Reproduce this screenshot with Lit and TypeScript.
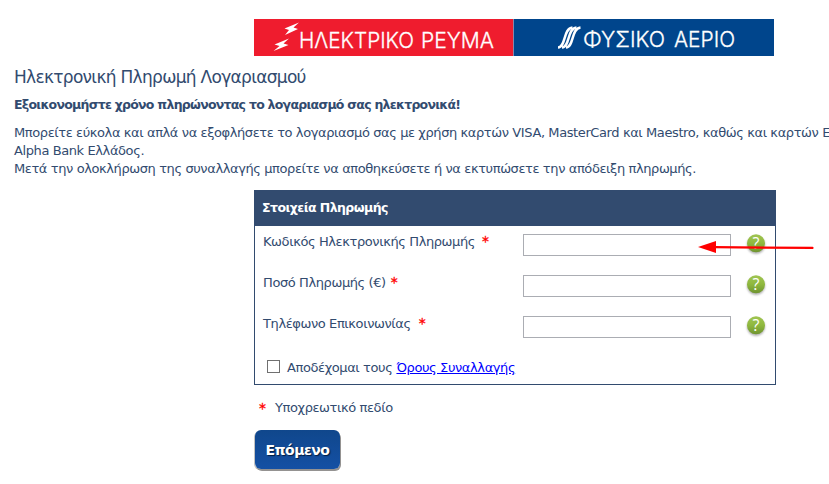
import { LitElement, html, css } from "lit";
import { customElement, property } from "lit/decorators.js";

@customElement("help-icon")
class HelpIcon extends LitElement {
  static styles = css`
    :host { display: block; width: 20px; height: 22px; }
    svg { display: block; overflow: visible; }
    text { font: 400 16px "Open Sans", "Noto Sans", sans-serif; letter-spacing: 0; }
  `;
  render() {
    return html`<svg width="20" height="22" viewBox="0 0 20 22">
      <defs>
        <linearGradient id="g" x1="0" y1="0" x2="0" y2="1">
          <stop offset="0" stop-color="#a0c552" />
          <stop offset="0.5" stop-color="#8fb83e" />
          <stop offset="1" stop-color="#6f9430" />
        </linearGradient>
        <filter id="s" x="-20%" y="-20%" width="140%" height="150%"><feGaussianBlur stdDeviation="0.8" /></filter>
      </defs>
      <circle cx="10" cy="11" r="9" fill="#777" opacity="0.6" filter="url(#s)" />
      <circle cx="10" cy="9.3" r="9" fill="url(#g)" />
      <text x="10" y="15" text-anchor="middle" fill="#fff">?</text>
    </svg>`;
  }
}

@customElement("form-row")
class FormRow extends LitElement {
  @property() label = "";
  @property({ type: Number }) gap = 8;
  static styles = css`
    :host { display: grid; grid-template-columns: 260px 208px 1fr; height: 41px; align-items: start; }
    .label { display: flex; line-height: 18px; padding-top: 7px; white-space: nowrap; }
    .star { color: #f00; font-size: 14px; -webkit-text-stroke: 0.3px #f00; position: relative; top: -1px; }
    .field { box-sizing: border-box; width: 208px; height: 22px; margin: 8px 0 0; padding: 0 4px; border: 1px solid #abadb3; border-radius: 0; background: #fff; outline: 0; font: inherit; }
    help-icon { margin: 8px 0 0 15px; }
  `;
  render() {
    return html`
      <div class="label"><span>${this.label}</span><span class="star" style="margin-left:${this.gap}px">*</span></div>
      <input class="field" aria-label=${this.label} />
      <help-icon></help-icon>
    `;
  }
}

@customElement("app-root")
class AppRoot extends LitElement {
  static styles = css`
    :host {
      display: block; position: relative; box-sizing: border-box; width: 829px; height: 484px;
      overflow: hidden; padding: 19px 0 0 14px; background: #fff; color: #324b6f;
      font: 13px/18px Verdana, "DejaVu Sans", sans-serif; letter-spacing: -0.4px;
    }
    .banner { display: flex; width: 520px; height: 37px; margin-left: 240px; }
    .tab { display: block; height: 37px; }
    .red { width: 259px; background: #ef1c2e; border-right: 1px solid #8a86a8; }
    .blue { width: 260px; background: #00458c; }
    .tab svg { display: block; overflow: visible; }
    .tab text { font-family: "Inter", sans-serif; font-size: 22px; font-weight: 300; letter-spacing: 0; fill: #fff; stroke: #fff; stroke-width: 0.3px; }
    h1 { margin: 10px 0 0; font-size: 17px; line-height: 22px; font-weight: 400; white-space: nowrap; letter-spacing: -0.7px; }
    h2 { margin: 8px 0 0; font-size: 12.5px; line-height: 18px; font-weight: 700; white-space: nowrap; letter-spacing: -0.74px; }
    .intro { margin: 10px 0 0; white-space: nowrap; }
    .intro div { height: 18px; }
    .panel { box-sizing: border-box; width: 522px; height: 195px; margin: 12px 0 0 240px; border: 1px solid #324b6f; }
    .head { height: 35px; padding-left: 7px; background: #324b6f; color: #fff; font-size: 12.5px; font-weight: 700; line-height: 34px; letter-spacing: -0.56px; }
    .rows { padding-left: 8px; }
    .accept { display: flex; align-items: center; height: 18px; padding: 10px 0 0 12px; white-space: nowrap; }
    .box { appearance: none; box-sizing: border-box; width: 13px; height: 13px; margin: 0 7px 3px 0; border: 1px solid #707070; background: #fff; }
    .link { color: #00f; text-decoration: underline; margin-left: 4px; }
    .note { display: flex; margin: 14px 0 0 245px; }
    .star { color: #f00; width: 16px; font-size: 14px; -webkit-text-stroke: 0.3px #f00; }
    .next {
      display: block; box-sizing: border-box; width: 85px; height: 39px; margin: 13px 0 0 241px; padding: 0;
      border: 0; border-radius: 6px; color: #fff; background: linear-gradient(#10478c, #1450a4);
      box-shadow: 1px 2px 0 #949291, -1px 1px 0 #c2c2c2;
      font: 700 14px/38px Verdana, "DejaVu Sans", sans-serif; letter-spacing: -0.5px; text-shadow: 1px 1px 1px #001c40;
    }
    .arrow { position: absolute; left: 694px; top: 238px; }
  `;

  render() {
    return html`
      <nav class="banner">
        <a class="tab red"><svg width="259" height="37">
          <path fill="#fff" d="M45 3.500 L30.500 9.500 L35 11 L31 16 L44 10 L39.500 8.500Z M35 19.500 L20.500 25.500 L25.500 27 L19.500 32 L34.500 26 L29.500 24.500Z" />
          <text x="45" y="29" textLength="115" lengthAdjust="spacingAndGlyphs">ΗΛΕΚΤΡΙΚΟ</text>
          <text x="167" y="29" textLength="73" lengthAdjust="spacingAndGlyphs">ΡΕΥΜΑ</text>
        </svg></a>
        <a class="tab blue"><svg width="260" height="37">
          <g fill="none" stroke="#fff" stroke-width="2.5">
            <path d="M44 28.500 C52 28.500 49 9.500 58.500 8.500" />
            <path d="M48 28.500 C56 28.500 53 9.500 62.500 8.500" />
            <path d="M52 28.500 C60 28.500 57 9.500 66.500 8.500" />
          </g>
          <text x="69" y="28" textLength="82" lengthAdjust="spacingAndGlyphs">ΦΥΣΙΚΟ</text>
          <text x="160" y="28" textLength="61" lengthAdjust="spacingAndGlyphs">ΑΕΡΙΟ</text>
        </svg></a>
      </nav>
      <h1>Ηλεκτρονική Πληρωμή Λογαριασμού</h1>
      <h2>Εξοικονομήστε χρόνο πληρώνοντας το λογαριασμό σας ηλεκτρονικά!</h2>
      <div class="intro">
        <div>Μπορείτε εύκολα και απλά να εξοφλήσετε το λογαριασμό σας με χρήση καρτών VISA, MasterCard και Maestro, καθώς και καρτών Ε</div>
        <div>Alpha Bank Ελλάδος.</div>
        <div>Μετά την ολοκλήρωση της συναλλαγής μπορείτε να αποθηκεύσετε ή να εκτυπώσετε την απόδειξη πληρωμής.</div>
      </div>
      <section class="panel">
        <div class="head">Στοιχεία Πληρωμής</div>
        <div class="rows">
          <form-row label="Κωδικός Ηλεκτρονικής Πληρωμής" .gap=${7}></form-row>
          <form-row label="Ποσό Πληρωμής (€)" .gap=${5}></form-row>
          <form-row label="Τηλέφωνο Επικοινωνίας" .gap=${8}></form-row>
        </div>
        <label class="accept"><input class="box" type="checkbox" /><span>Αποδέχομαι τους</span><a class="link">Όρους Συναλλαγής</a></label>
      </section>
      <div class="note"><span class="star">*</span><span>Υποχρεωτικό πεδίο</span></div>
      <button class="next">Επόμενο</button>
      <svg class="arrow" width="122" height="18">
        <path d="M20 9.200 L118.500 9.900" stroke="#f00" stroke-width="2.200" stroke-linecap="round" />
        <path d="M4 9 L22 3 V15Z" fill="#f00" />
      </svg>
    `;
  }
}
